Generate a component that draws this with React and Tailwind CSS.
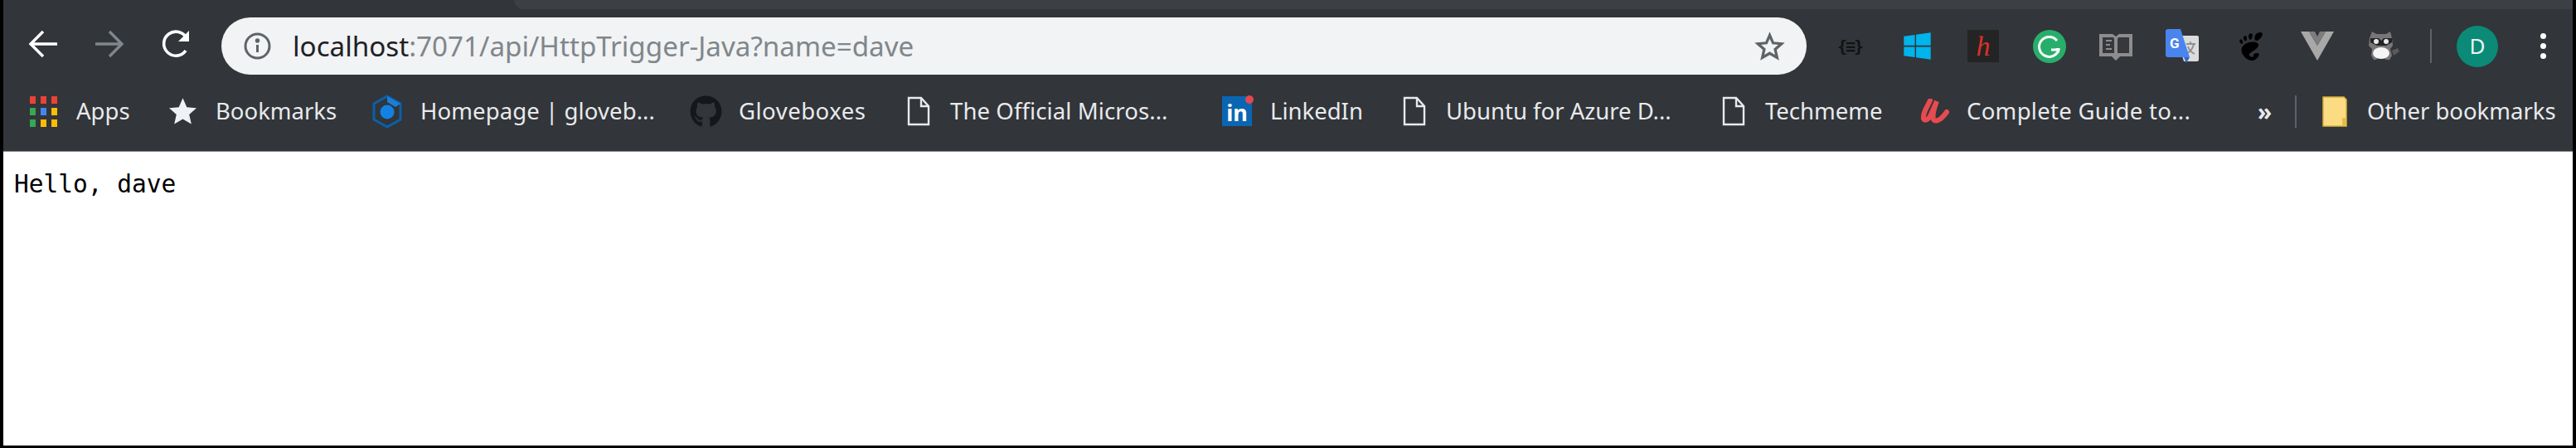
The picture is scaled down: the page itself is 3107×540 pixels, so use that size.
import { FaGithub, FaWindows } from "react-icons/fa";
import { SiGnome } from "react-icons/si";

const sans = "font-['Noto_Sans',sans-serif]";

const FileIcon = () => (
  <svg width="28" height="36" viewBox="0 0 28 36" fill="none" stroke="#e8eaed" strokeWidth="2.4">
    <path d="M2 2h15l9 10v22H2z" />
    <path d="M17 2v10h9" />
  </svg>
);

const Label = ({ children, className }) => (
  <span className={`text-[27.5px] leading-[40px] text-[#e8eaed] whitespace-nowrap ${sans} ${className}`}>
    {children}
  </span>
);

function AppsIcon() {
  const colors = ["#ea4335", "#ea4335", "#ea4335", "#34a853", "#4285f4", "#fbbc05", "#34a853", "#fbbc05", "#fbbc05"];
  return (
    <div className="grid grid-cols-3 gap-x-[6px] gap-y-[5px] w-[33px]">
      {colors.map((c, i) => (
        <div key={i} className="w-[7px] h-[9px]" style={{ background: c }} />
      ))}
    </div>
  );
}

export default function App() {
  return (
    <div className="h-[540px] w-[3107px] bg-black pl-[4px] pr-[4px] pb-[3px] flex flex-col overflow-hidden">
      <div className="h-[183px] shrink-0 bg-[#323539] border-b border-[#8a8c8e] flex flex-col">
        {/* tab strip */}
        <div className="h-[11px] flex">
          <div className="w-[616px]" />
          <div className="flex-1 bg-[#3c4044] rounded-bl-[14px]" />
        </div>

        {/* toolbar */}
        <div className="h-[79px] flex items-start pt-[10px]">
          <div className="ml-[30px] mt-[14px] flex items-center">
            <svg width="36" height="34" viewBox="0 0 36 34" fill="none" stroke="#ffffff" strokeWidth="3.4">
              <path d="M35 17H4M18 2L3 17l15 15" />
            </svg>
            <svg className="ml-[44px]" width="36" height="34" viewBox="0 0 36 34" fill="none" stroke="#80868b" strokeWidth="3.4">
              <path d="M1 17h31M18 2l15 15-15 15" />
            </svg>
            <svg className="ml-[44px]" width="37" height="36" viewBox="0 0 37 36" fill="none" stroke="#ffffff" strokeWidth="3.6">
              <path d="M30 26a14.5 14.5 0 1 1 1-15" />
              <path d="M34 2v13H21" fill="#ffffff" stroke="none" />
            </svg>
          </div>

          {/* address bar */}
          <div className="ml-[36px] w-[1912px] h-[69px] rounded-full bg-[#f1f3f4] flex items-center pl-[27px] pr-[26px]">
            <svg width="33" height="33" viewBox="0 0 33 33" fill="none" stroke="#5f6368" strokeWidth="3">
              <circle cx="16.5" cy="16.5" r="14.5" />
              <path d="M16.5 15v9" />
              <circle cx="16.5" cy="10" r="1.2" fill="#5f6368" />
            </svg>
            <span className={`ml-[26px] text-[33.2px] leading-[44px] whitespace-nowrap text-[#80868b] ${sans}`}>
              <span className="text-[#202124]">localhost</span>:7071/api/HttpTrigger-Java?name=dave
            </span>
            <svg className="ml-auto" width="37" height="36" viewBox="0 0 24 24" fill="none" stroke="#5f6368" strokeWidth="2.2">
              <path d="M12 3l2.7 6.2 6.8.6-5.1 4.5 1.5 6.6L12 17.5l-5.9 3.4 1.5-6.6-5.1-4.5 6.8-.6z" />
            </svg>
          </div>

          {/* extensions */}
          <div className="flex items-center h-[69px]">
            <span className="ml-[36px] w-[32px] text-center text-[20px] font-bold leading-none text-[#111214] font-['DejaVu_Sans_Mono',monospace] whitespace-nowrap tracking-[-2px]">
              {"{≡}"}
            </span>
            <FaWindows className="ml-[47px]" size={37} color="#00b4ec" />
            <div className="ml-[42px] w-[38px] h-[39px] bg-[#242424] flex items-center justify-center">
              <span className="text-[34px] leading-none italic text-[#d8322a] font-['Liberation_Serif',serif]">h</span>
            </div>
            <svg className="ml-[41px]" width="40" height="40" viewBox="0 0 40 40">
              <circle cx="20" cy="20" r="20" fill="#27ae6b" />
              <path d="M29 13a12 12 0 1 0 2 11h-9" fill="none" stroke="#ffffff" strokeWidth="3" />
              <path d="M27 22l5 0 0 6z" fill="#ffffff" />
            </svg>
            <svg className="ml-[40px]" width="40" height="34" viewBox="0 0 40 34">
              <path d="M0 2h16l4 3 4-3h16v27H25l-5 5-5-5H0z" fill="#8d8d8d" />
              <path d="M4 6h13l1 2v17H4zM22 8l1-2h13v19H22z" fill="#36383b" />
              <path d="M8 10h7M8 15h5M8 20h7" stroke="#8d8d8d" strokeWidth="2" />
            </svg>
            <svg className="ml-[40px]" width="40" height="41" viewBox="0 0 40 41">
              <path d="M13 8h25a2 2 0 0 1 2 2v27a2 2 0 0 1-2 2H22z" fill="#dcdcdc" />
              <path d="M25 18h11M30 15v3M34 18c-1 6-5 10-10 12M27 21c1 4 4 7 8 9" fill="none" stroke="#8f8f8f" strokeWidth="1.8" />
              <path d="M3 0h15l11 34H3a3 3 0 0 1-3-3V3a3 3 0 0 1 3-3z" fill="#4a84ee" />
              <path d="M22 34h7l-4 7z" fill="#3468c8" />
              <text x="5" y="23" fontSize="17" fontWeight="700" fill="#ffffff" fontFamily="Roboto, sans-serif">G</text>
            </svg>
            <SiGnome className="ml-[46px]" size={34} color="#000000" />
            <svg className="ml-[43px]" width="40" height="35" viewBox="0 0 40 35">
              <path d="M0 0h10l10 17L30 0h10L20 35z" fill="#a8a8a8" />
              <path d="M10 0h7l3 6 3-6h7L20 17z" fill="#7d7d7d" />
            </svg>
            <svg className="ml-[41px]" width="38" height="38" viewBox="0 0 38 38">
              <path d="M5 1l5 3h12l5-3 2 8 1 9-3 4 2 8-3 5h-4l-2-2h-8l-2 2H7l-3-5 1-8-4-4 1-9z" fill="#777777" />
              <path d="M3 9l10 0 3 3 3-3 10 0v5l-7 4h-11l-8-4z" fill="#242424" />
              <circle cx="10" cy="13" r="3" fill="#e8e8e8" />
              <circle cx="22" cy="13" r="3" fill="#e8e8e8" />
              <ellipse cx="16" cy="27" rx="10" ry="7" fill="#f5f5f5" />
              <path d="M29 24l7-3 2 4-7 5z" fill="#5a5a5a" />
            </svg>
            <div className="ml-[37px] w-[2px] h-[41px] bg-[#5f6368]" />
            <div className={`ml-[30px] w-[50px] h-[50px] rounded-full bg-[#0b8a77] flex items-center justify-center text-[26px] text-[#e8f5f2] ${sans}`}>
              D
            </div>
            <div className="ml-[51px] flex flex-col gap-[5px]">
              <div className="w-[7px] h-[7px] rounded-full bg-[#ffffff]" />
              <div className="w-[7px] h-[7px] rounded-full bg-[#ffffff]" />
              <div className="w-[7px] h-[7px] rounded-full bg-[#ffffff]" />
            </div>
          </div>
        </div>

        {/* bookmarks */}
        <div className="h-[92px] flex items-center pb-[4px]">
          <div className="ml-[32px] w-[34px] shrink-0"><AppsIcon /></div>
          <Label className="ml-[22px] w-[66px]">Apps</Label>
          <svg className="ml-[46px]" width="33" height="32" viewBox="0 0 24 23">
            <path d="M12 0l3.5 8 8.5.8-6.4 5.6 1.9 8.4L12 18.4 4.5 22.8l1.9-8.4L0 8.8 8.5 8z" fill="#eef1f6" />
          </svg>
          <Label className="ml-[23px] w-[145px]">Bookmarks</Label>
          <svg className="ml-[44px]" width="36" height="41" viewBox="0 0 36 41" fill="none">
            <path d="M18 2l16 9v19l-16 9-16-9V11z" stroke="#0c5fa8" strokeWidth="3" />
            <path d="M18 2l16 9-6 4-10-6z" fill="#1c7ed6" />
            <circle cx="18" cy="21" r="8.5" fill="#1282e2" />
          </svg>
          <Label className="ml-[22px] w-[281px] tracking-[0.1px]">Homepage | gloveb...</Label>
          <FaGithub className="ml-[44px] shrink-0" size={39} color="#15171a" />
          <Label className="ml-[20px] w-[153px] tracking-[0.5px]">Gloveboxes</Label>
          <div className="ml-[50px]"><FileIcon /></div>
          <Label className="ml-[24px] w-[268px] tracking-[0.1px]">The Official Micros...</Label>
          <div className="ml-[60px] relative w-[38px] h-[38px] shrink-0">
            <div className="absolute left-0 top-[1px] w-[36px] h-[36px] bg-[#0a66b2] flex items-end justify-center">
              <span className={`text-[27px] leading-[32px] font-bold text-white ${sans}`}>in</span>
            </div>
            <div className="absolute right-0 top-0 w-[10px] h-[10px] rounded-full bg-[#e5484d]" />
          </div>
          <Label className="ml-[20px] w-[110px]">LinkedIn</Label>
          <div className="ml-[50px]"><FileIcon /></div>
          <Label className="ml-[24px] w-[280px]">Ubuntu for Azure D...</Label>
          <div className="ml-[53px]"><FileIcon /></div>
          <Label className="ml-[24px] w-[142px]">Techmeme</Label>
          <svg className="ml-[45px]" width="35" height="30" viewBox="0 0 35 30" fill="none" stroke="#e54b4f" strokeWidth="6" strokeLinecap="round">
            <path d="M12 2C8 10 3 18 4 24c1 3 5 2 8-3l8-18c-3 8-6 16-4 22 2 3 6 1 9-1 3-3 5-5 7-8" />
          </svg>
          <Label className="ml-[21px] w-[271px] tracking-[0.3px]">Complete Guide to...</Label>
          <span className={`ml-[80px] w-[15px] text-[28px] leading-[36px] font-bold text-[#e8eaed] ${sans}`}>»</span>
          <div className="ml-[30px] w-[2px] h-[39px] bg-[#5f6368]" />
          <svg className="ml-[31px]" width="30" height="37" viewBox="0 0 30 37">
            <path d="M1 1h25l3 3v32H1z" fill="#fbdc82" stroke="#d8b13e" strokeWidth="1.5" />
            <path d="M24 26h5v10h-5z" fill="#e4bc48" />
          </svg>
          <Label className="ml-[24px]">Other bookmarks</Label>
        </div>
      </div>

      {/* page */}
      <div className="flex-1 bg-white pl-[13px] pt-[21px]">
        <pre className="text-[29.5px] leading-[37px] text-black font-['DejaVu_Sans_Mono',monospace]">Hello, dave</pre>
      </div>
    </div>
  );
}
